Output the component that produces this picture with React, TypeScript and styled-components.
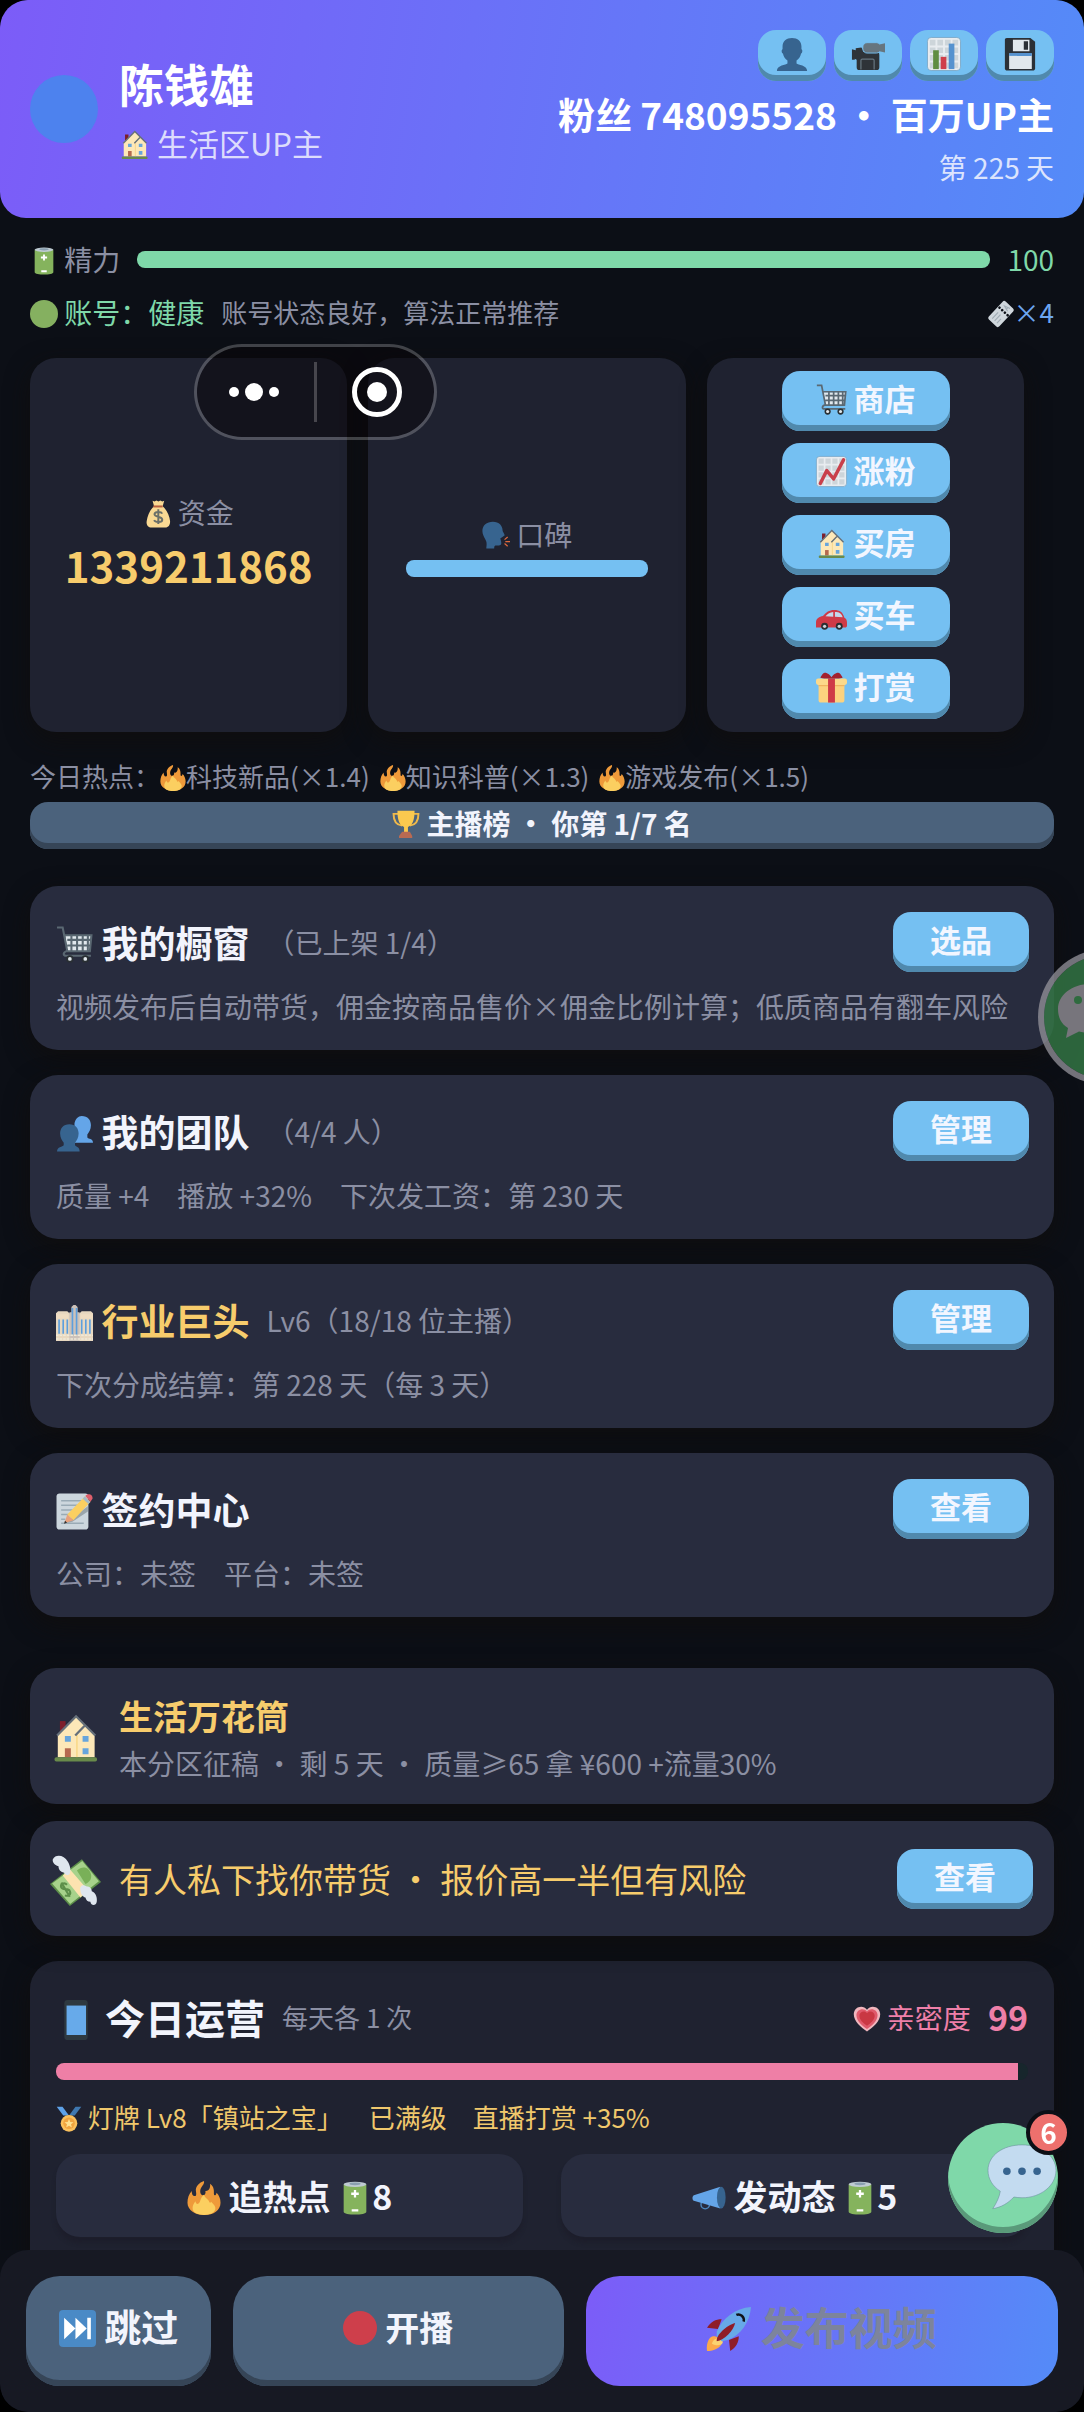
import type { ReactNode } from "react"
import styled, { createGlobalStyle } from "styled-components"

const GlobalStyle = createGlobalStyle`
  * {
    box-sizing: border-box;
  }

  body {
    margin: 0;
    background: #000;
    color: #f2f4fc;
    font-family: "Noto Sans CJK SC", "Noto Sans", sans-serif;
    font-size: 28px;
    line-height: 40px;
    text-spacing-trim: space-all;
  }

  h1,
  h2,
  p {
    margin: 0;
  }

  button {
    border: none;
    margin: 0;
    font-family: inherit;
    cursor: pointer;
  }
`

/* ---------- emoji ---------- */

const EmojiSvg = styled.svg`
  width: 1em;
  height: 1em;
  vertical-align: -0.14em;
  overflow: visible;
`

const Emoji = ({ children }: { children: ReactNode }) => (
  <EmojiSvg viewBox="0 0 36 36" aria-hidden="true">
    {children}
  </EmojiSvg>
)

const House = () => (
  <Emoji>
    <path fill="#7d1f2b" d="M7 6.4h4V14H7z" />
    <path fill="#fde8b8" d="M5.5 15.5 18.400 3l8 8 5.100 5V32h-26z" />
    <path fill="#f9d98c" d="M18.400 15.500h1.200V32h-1.200z" />
    <path fill="none" stroke="#66707a" strokeWidth="1.600" d="M5 16.600 18.400 3l13.600 13.600M17.800 16.600l7-7.200" />
    <path fill="#67a5dc" d="M10.500 17h4.200v4h-4.200zM23 17h4.200v4H23zM23 25.600h4.200v4.200H23z" />
    <path fill="#b5694f" d="M10.500 25.600h4.200V32h-4.200z" />
    <rect x="3.200" y="32" width="30" height="2.900" rx="1.200" fill="#698b4b" />
  </Emoji>
)

const Bust = () => (
  <Emoji>
    <path
      fill="#37648f"
      d="M18 1c6 0 10 3.600 10 9v3c1.400.4 1.200 4-.4 4.600C27 21 25 23.500 22.800 25v3c1.500 1.600 11.200 1.600 11.200 8H2c0-6.400 9.700-6.400 11.200-8v-3C11 23.500 9 21 8.400 17.600 6.800 17 6.600 13.400 8 13v-3c0-5.400 4-9 10-9z"
    />
  </Emoji>
)

const VideoCamera = () => (
  <Emoji>
    <path fill="#2e3338" d="M1 13l4 1v-2l6-1 2 3v2h14c2 0 3 1 3 3v13c0 2-1 3-3 3H9c-2 0-3-1-3-3v-8l-2-1v1H1z" />
    <rect x="12.500" y="6" width="19" height="11" rx="4.500" fill="#66757f" stroke="#75bff0" strokeWidth="1" />
    <path fill="#66757f" d="M30 8l6-1.500v10L30 15z" />
    <path fill="none" stroke="#66757f" strokeWidth="1.300" d="M10.500 34.500V25c0-1 .5-1.500 1.500-1.500h11c1 0 1.500.5 1.500 1.500v9.500" />
  </Emoji>
)

const ChartPaper = () => (
  <>
    <rect x=".5" y=".5" width="35" height="35" rx="4" fill="#e8ecf0" stroke="#5f8fb0" strokeWidth=".6" />
    <path
      fill="#cdd5da"
      d="M3 3h6v6H3zM11 3h6v6h-6zM19 3h6v6h-6zM27 3h6v6h-6zM3 11h6v6H3zM11 11h6v6h-6zM19 11h6v6h-6zM27 11h6v6h-6zM3 19h6v6H3zM11 19h6v6h-6zM19 19h6v6h-6zM27 19h6v6h-6zM3 27h6v6H3zM11 27h6v6h-6zM19 27h6v6h-6zM27 27h6v6h-6z"
    />
  </>
)

const BarChart = () => (
  <Emoji>
    <ChartPaper />
    <path fill="#5f8d42" d="M6.500 14h6v20h-6z" />
    <path fill="#cf3f4a" d="M14.500 21h6v13h-6z" />
    <path fill="#5592cf" d="M23 7h6v27h-6z" />
  </Emoji>
)

const ChartUp = () => (
  <Emoji>
    <ChartPaper />
    <path fill="none" stroke="#c9404b" strokeWidth="4" strokeLinecap="round" strokeLinejoin="round" d="M5 32l7.500-15 8 9.500L32 4.500" />
  </Emoji>
)

const Floppy = () => (
  <Emoji>
    <path fill="#2b3036" d="M4 1h25l5 4v28c0 1.500-1 2.500-2.500 2.500h-27C3 35.500 2 34.500 2 33V3c0-1.200.8-2 2-2z" />
    <path fill="#e1e8ed" d="M10.500 3H28v12H10.500zM6.500 17.500h24V34h-24z" />
    <path fill="#2b3036" d="M22 4.500h4.500v9H22z" />
    <path fill="#5592cf" d="M6.500 17h24v3h-24z" />
  </Emoji>
)

const Battery = () => (
  <Emoji>
    <path fill="#85b35d" d="M6 3.500h24v29c0 4-24 4-24 0z" />
    <ellipse cx="18" cy="3.500" rx="12" ry="2.800" fill="#bfcbd2" />
    <ellipse cx="18" cy="3" rx="6" ry="1.400" fill="#8a9fb0" />
    <path fill="#fff" d="M16.800 9.500h2.400v2.800H22v2.400h-2.800v2.800h-2.400v-2.800H14v-2.400h2.800zM14.500 30h7v2.400h-7z" />
  </Emoji>
)

const Circle = ({ color }: { color: string }) => (
  <Emoji>
    <circle cx="18" cy="18" r="18" fill={color} />
  </Emoji>
)

const Ticket = () => (
  <Emoji>
    <g transform="rotate(-47 18 18)">
      <rect x="1" y="8" width="34" height="20" rx="3" fill="#d0d7dd" />
      <path stroke="#0d1017" strokeWidth="3.600" strokeLinecap="round" strokeDasharray=".1 5" d="M23 10.500v16" />
      <path fill="none" stroke="#a1adb6" strokeWidth="1.600" d="M5 13.500h12M5 18h12M5 22.500h8M27 22l2.500-8 2.500 8M28 19h3" />
    </g>
  </Emoji>
)

const MoneyBag = () => (
  <Emoji>
    <path fill="#f9d993" d="M11 1l2.500 1L16 .5 18.500 2 21 .5 23.500 2 26 1l-2 7c5 4 9 13 9.500 19 .4 5-2 8.500-6 8.500h-18c-4 0-7-3.500-6-8.500C4.500 20 8 12 13 8z" />
    <path fill="#b8603f" d="M12 7h12v2.600H12z" />
    <path fill="none" stroke="#6b7069" strokeWidth="2.500" d="M23.500 17.500c-1.500-3-10-3-10 .8 0 4.200 10 2.200 10 7 0 4-9 4-10.500.7M18.400 12v19" />
  </Emoji>
)

const SpeakingHead = () => (
  <Emoji>
    <path
      fill="#37648f"
      d="M14 1c8 0 12.500 5 12.500 11.500 0 1.500 3 4.500 2.500 6-.3.800-1.600.8-1.800 1.300l-3.700 2.700.8 2.500c.8 3.500 1 5.500-1.500 6.200-2.500.6-5.500-.4-6.500.8-.6 1-.6 2-.6 3.500H5.500c1-7 .5-9-1.500-12.500C2.500 20.500.5 17 .5 13 .5 5.500 6 1 14 1z"
    />
    <path stroke="#e0693c" strokeWidth="1.500" d="M29 24l4-3.500M30 26.500h6M29 29l4 3.500" />
  </Emoji>
)

const Cart = () => (
  <Emoji>
    <path fill="#e1e8ed" d="M9 9.500h25l-1.500 15H11z" />
    <path
      fill="none"
      stroke="#5a6872"
      strokeWidth="2"
      d="M1 1.500h5.500L11 24.500H33L34.500 9H8.500M11 13.500h22.500M11 19h22M15 9v15M20.500 9v15M26 9v15M31 9v15M11 24c-5 2-4 5-1 5h24"
    />
    <circle cx="13.500" cy="32" r="3.600" fill="#292f33" />
    <circle cx="28.500" cy="32" r="3.600" fill="#292f33" />
    <circle cx="13.500" cy="32" r="1.800" fill="#e1e8ed" />
    <circle cx="28.500" cy="32" r="1.800" fill="#e1e8ed" />
  </Emoji>
)

const Car = () => (
  <Emoji>
    <path fill="#cf3a47" d="M0 32v-6c0-5 4-6.500 8-7.500 4-4.500 7-7 13-7 7 0 10 2.500 12 9 2 1 3 2.500 3 6v3.500c0 1.500-1 2-2 2z" />
    <path fill="#c3d9ec" d="M11 19c3-3 5-4.800 9-5v5.500zM22 14c5 0 7.500 1.500 9 6l-9-.5z" />
    <circle cx="10" cy="30.500" r="4" fill="#292f33" />
    <circle cx="27" cy="30.500" r="4" fill="#292f33" />
    <circle cx="10" cy="30.500" r="1.900" fill="#ccd6dd" />
    <circle cx="27" cy="30.500" r="1.900" fill="#ccd6dd" />
  </Emoji>
)

const Gift = () => (
  <Emoji>
    <path fill="#fcd27f" d="M3 14h30v18.500c0 2-1 3-3 3H6c-2 0-3-1-3-3z" />
    <path fill="#f0b45f" d="M3 14h30v2.500H3z" />
    <rect y="7.500" width="36" height="7.500" rx="2.500" fill="#fcd98a" />
    <path fill="#cf3a47" d="M14 7.500h8v28h-8z" />
    <path fill="#a3212f" d="M18 7.500C13 7.500 7 8 5 6.500 7 4 8 1 10 1c4 0 6.500 3 8 5 1.500-2 4-5 8-5 2 0 3 3 5 5.500-2 1.500-8 1-13 1z" />
  </Emoji>
)

const Fire = () => (
  <Emoji>
    <path
      fill="#ee9a3a"
      d="M18 0c1 4-4 6-4 11 0 2 1 4 3 4s3-2 2.500-4.500C22 11 25 9 24.500 3 29 6 28.500 11 28.500 14c0 2 2.500 1.500 2.800-1.500C34 15 35.500 19 35.500 23c0 8-7.500 13-17 13S.5 31 .5 23c0-5 1.500-9 4.500-12.500 0 3 1 5.500 3 5.500s2-2 1.500-5C8.500 6 13 1.500 18 0z"
    />
    <path fill="#fbcf60" d="M18 14.500c1 4 4.500 4 5.500 7.500.5 1.500 1.500 1.500 2 0 3 3 5 5 4.500 8-1 4-6 6-12 6S7 34 6 30c-.5-3.500 1-6 3-8.500.5 3 2 3.500 3.500 2 2.500-2 1-5.500 5.500-9z" />
  </Emoji>
)

const Trophy = () => (
  <Emoji>
    <path fill="none" stroke="#f0b94a" strokeWidth="2.500" d="M8 5H2c0 9 3 14 11 15M28 5h6c0 9-3 14-11 15" />
    <path fill="#fbc94f" d="M7 1h22c0 11-2 18-8.500 21v7h-5v-7C9 19 7 12 7 1z" />
    <path fill="#b96a52" d="M13 28h10l3 5.500V36H9v-2.500z" />
  </Emoji>
)

const Busts = () => (
  <Emoji>
    <path fill="#64a5e8" d="M25 1c6 0 9 4 9 9 0 4-2 7-3.500 9v3c1 1.500 5.500 1 5.500 5H18V8c1-4 3.500-7 7-7z" />
    <path fill="#37648f" d="M13 9c6 0 9 4 9 9 0 4-2 7-3.500 9v2.500C19.500 31 23 31 23 35.500H1C1 31 6.500 31 7.500 29.500V27C6 25 4 22 4 18c0-5 3-9 9-9z" />
  </Emoji>
)

const Buildings = () => (
  <Emoji>
    <path fill="#e8d8c0" d="M0 9l2-2h9l2 2h10l2-2h9l2 2v27H0z" />
    <path fill="#ccc2ba" d="M13 8h2V3l2-2h2l2 2v5h2v28H13z" />
    <path fill="#f0ddc2" d="M0 10h12v4H0zM24 10h12v4H24z" />
    <path stroke="#5d9fdd" strokeWidth="1.600" d="M3 15v14M7 15v14M11 15v14M16 4v26M20 4v26M25 15v14M29 15v14M33 15v14" />
    <path stroke="#f0ead8" strokeWidth="1.500" d="M0 30.500h36M0 34h36" strokeDasharray="2.500 1" />
  </Emoji>
)

const Memo = () => (
  <Emoji>
    <rect x=".5" y=".5" width="31" height="35" rx="3" fill="#ccd6dd" />
    <path stroke="#99aab5" strokeWidth="1.500" d="M5 7.500h21M5 12h17M5 16.500h14M5 21h9M5 25.500h4M5 29.500h22" />
    <path fill="#9aa5ab" d="M9 29.500 31 13v5L16 28z" />
    <path fill="#fbcf60" d="M11 21 28 3.500l5.500 5L17 26.500z" />
    <path fill="#e8a07c" d="M11 21l6 5.500-9 3z" />
    <path fill="#292f33" d="M8.800 27l2 2-3 1z" />
    <path fill="#a3b8c7" d="M26 5.500l5.500 5.300 2-2L28 3.500z" />
    <path fill="#dd5f6c" d="M28.500 3c2-3 7.500-2 7 2.500L33.500 8.500z" />
  </Emoji>
)

const MoneyWings = () => (
  <Emoji>
    <path fill="#5d8f4a" d="M0 20.500 22.500 3 36 19 14 36z" />
    <path fill="#a7d28b" d="M1.500 20.200 22.800 4.200 34.500 18.500 14.200 34.500z" />
    <path fill="#79b058" d="M19 11c4-4 9-2.500 10 3 .5 3-1 5-4 6.500z" />
    <path fill="#fde3b0" d="M9 14.500l5-4.500L27 25l-5.500 5z" />
    <path fill="none" stroke="#5d8f4a" strokeWidth="1.500" d="M12 21c-2-2-5-.5-4 2 1 2 5 0 6 2.500 1 2-1 4-3.500 3M8 19.500l6 10" />
    <path fill="#dfe6ee" d="M2 3C4-1 10 0 12.500 4.500 14 7 15 10 14 13c-1 2-4 1-4-.5C7 12 6 10 6 8 3 7 1.500 5 2 3zM21.500 25c-1-3 2-4.500 4-3 3 0 4 2 4 3.500 3 1 4 5 3.500 7.500-.5 3-4 3-4.500 0-2 0-3-1-3.500-3-2-.5-3.500-3-3.500-5z" />
  </Emoji>
)

const Phone = () => (
  <Emoji>
    <rect x="7.500" width="21" height="36" rx="3" fill="#2e3940" />
    <path fill="#67aaea" d="M9.500 5h17.500v26.500H9.500z" />
  </Emoji>
)

const Medal = () => (
  <Emoji>
    <path fill="#5ea2e8" d="M1 1h8l9 12h-8z" />
    <path fill="#3f78b0" d="M35 1h-8l-9 12h8z" />
    <circle cx="18" cy="24" r="11.500" fill="#fbc15c" />
    <circle cx="18" cy="24" r="8" fill="#f0a43f" />
    <path fill="#fde08f" d="M18 18l1.800 4.200 4.500.3-3.500 2.900 1.200 4.400-4-2.500-4 2.500 1.200-4.400-3.500-2.900 4.500-.3z" />
  </Emoji>
)

const heart = "M18 34C10 29 1 21 1 12 1 2 13-1 18 6 23-1 35 2 35 12c0 9-9 17-17 22z"

const Heart = () => (
  <Emoji>
    <path fill="#f0b6bd" d={heart} />
    <path fill="#df5a6b" d={heart} transform="translate(3.600 3.600) scale(.8)" />
    <path fill="#c93843" d={heart} transform="translate(7.600 7) scale(.58)" />
  </Emoji>
)

const Megaphone = () => (
  <Emoji>
    <circle cx="14" cy="25" r="4.500" fill="none" stroke="#4d88c0" strokeWidth="1.500" />
    <path fill="#64a5e8" d="M2 15 30 6v23L2 21c-2-1-2-5 0-6z" />
    <ellipse cx="31" cy="17.500" rx="4.600" ry="11.500" fill="#37648f" />
  </Emoji>
)

const NextTrack = () => (
  <Emoji>
    <rect width="36" height="36" rx="4" fill="#4a8ac6" />
    <path fill="#fff" d="M5 7.500 16 18 5 28.500zM16 7.500 27 18 16 28.500zM27.500 7.500h3.500v21h-3.500z" />
  </Emoji>
)

const Rocket = () => (
  <Emoji>
    <path fill="#8f1d28" d="M0 17c3-5 7-7 12-7l-3 8zM26 24c0 5-2 9-7 12l-1-9z" />
    <path fill="#fba94a" d="M0 36c-1-8 3-13 6-12 3 0 6 3 6 6-1 3-6 6-12 6z" />
    <path fill="#fbd372" d="M4 30c1-4 5-6 8-3s-2 6-8 3z" />
    <path fill="#67a9e8" d="M8 20C13 9 23 1 36 0 35 12 28 23 17 27l-5 1-4-4z" />
    <path fill="#8f1d28" d="M8 28c-1-5 8-13 15-15-1 6-9 14-15 15z" />
    <path fill="none" stroke="#101318" strokeWidth="2" d="M24 6.500c3-1.500 7 1.500 6 5.500" />
  </Emoji>
)

const Balloon = () => (
  <Emoji>
    <path fill="#c3dbf0" stroke="#6a8f9c" strokeWidth=".3" d="M18 1c10 0 18 5.500 18 13.500S28 29 18 29c-1.500 0-3-.2-4.300-.4-3 3.200-6.500 5.400-11.200 6.200 2-3 3.600-6.300 4-9.300C2.500 23 0 19 0 14.500 0 6.500 8 1 18 1z" />
    <g fill="#37648f">
      <circle cx="10" cy="15" r="2" />
      <circle cx="18" cy="15" r="2" />
      <circle cx="26" cy="15" r="2" />
    </g>
  </Emoji>
)

/* ---------- shared parts ---------- */

const Page = styled.div`
  display: flex;
  flex-direction: column;
  height: 100vh;
  border-radius: 28px;
  overflow: hidden;
  background: #0c0f16;
`

const Scroll = styled.div`
  flex: 1;
  min-height: 0;
  overflow-y: auto;
  scrollbar-width: none;
`

const Content = styled.main`
  padding: 20px 30px 26px;
`

const Button = styled.button<{ $wide?: boolean }>`
  flex-shrink: 0;
  width: ${(p) => (p.$wide ? "168px" : "136px")};
  height: 60px;
  padding: 0 0 6px;
  border-radius: 18px;
  background: #75c0f2;
  box-shadow: inset 0 -6px 0 #5089ad;
  color: #f2f6ff;
  font-size: 31px;
  font-weight: 700;
  line-height: 40px;
`

const Muted = styled.span<{ $size?: number }>`
  color: #8b8fa3;
  font-size: ${(p) => p.$size || 28}px;
`

const Track = styled.div`
  flex: 1;
  height: 17px;
  border-radius: 8px;
  overflow: hidden;
  background: #17262c;
`

const Fill = styled.div<{ $color: string }>`
  height: 100%;
  background: ${(p) => p.$color};
`

interface BarProps {
  label: string
  value: number
  color: string
}

const Bar = ({ label, value, color }: BarProps) => (
  <Track role="progressbar" aria-label={label} aria-valuenow={value}>
    <Fill $color={color} style={{ width: `${value}%` }} />
  </Track>
)

/* ---------- header ---------- */

const Header = styled.header`
  display: flex;
  align-items: center;
  padding: 30px 30px 31px;
  border-radius: 26px;
  background: linear-gradient(100deg, #7c5cf8, #548bf8);
`

const HeaderBackdrop = styled.div`
  background: linear-gradient(#000 50%, transparent 50%);
`

const Avatar = styled.div`
  width: 68px;
  height: 68px;
  margin-right: 21px;
  border-radius: 50%;
  background: #4d82ee;
`

const Name = styled.h1`
  margin-bottom: 6px;
  color: #fff;
  font-size: 45px;
  line-height: 62px;
`

const Role = styled.p`
  color: #dcdcfc;
  font-size: 31px;
  line-height: 44px;
`

const HeaderSide = styled.div`
  display: flex;
  flex-direction: column;
  align-items: flex-end;
  margin-left: auto;
`

const Tools = styled.div`
  display: flex;
  gap: 8px;
`

const ToolButton = styled.button`
  width: 68px;
  height: 51px;
  padding: 0 0 6px;
  border-radius: 18px;
  background: #75c0f2;
  box-shadow: inset 0 -6px 0 #5089ad;
  font-size: 34px;
  line-height: 40px;
`

const Fans = styled.p`
  margin: 6px 0;
  color: #fff;
  font-size: 37px;
  font-weight: 700;
  line-height: 54px;
`

const Day = styled.p`
  color: #dce4fd;
`

/* ---------- status ---------- */

const StatusRow = styled.div`
  display: flex;
  align-items: center;
  gap: 17px;
  height: 42px;
  margin-bottom: 11px;
  color: #7fd8a9;
`

const Tickets = styled.span`
  margin-left: auto;
  color: #6ca6f0;
  font-size: 26px;
`

const Stats = styled.section`
  display: flex;
  gap: 21px;
  margin-top: 25px;
`

const StatCard = styled.div`
  display: flex;
  flex-direction: column;
  justify-content: center;
  align-items: center;
  width: 31%;
  padding: 13px;
  border-radius: 26px;
  background: #1f2230;
  box-shadow: 0 8px 24px rgba(16, 14, 12, 0.8);
`

const Money = styled.strong`
  color: #f7cc6c;
  font-size: 42px;
  line-height: 66px;
`

const Reputation = styled.div`
  display: flex;
  width: 100%;
  padding: 6px 25px 0;
`

const ShopList = styled.div`
  display: flex;
  flex-direction: column;
  gap: 12px;
`

const Hot = styled.p`
  margin-top: 24px;
  color: #8b8fa3;
  font-size: 26px;
`

const HotTopic = styled.span`
  margin-right: 10px;
`

const RankButton = styled.button`
  display: block;
  width: 100%;
  height: 47px;
  margin: 6px 0 37px;
  padding: 0 0 6px;
  border-radius: 18px;
  background: #4b627c;
  box-shadow: inset 0 -6px 0 #364557;
  color: #f2f4fc;
  font-size: 28px;
  font-weight: 700;
  line-height: 40px;
`

/* ---------- cards ---------- */

const Card = styled.section`
  margin-bottom: 25px;
  padding: 26px 25px 24px 26px;
  border-radius: 28px;
  background: #282c3e;
  box-shadow: 0 8px 24px rgba(16, 14, 12, 0.8);
`

const CardHead = styled.div`
  display: flex;
  align-items: center;
  gap: 17px;
  margin-bottom: 14px;
`

const CardTitle = styled.h2<{ $gold?: boolean }>`
  color: ${(p) => (p.$gold ? "#f7cc6c" : "#f2f4fc")};
  font-size: 37px;
  line-height: 54px;
`

const Spacer = styled.div`
  flex: 1;
`

const CardText = styled.p`
  color: #8b8fa3;
`

interface InfoCardProps {
  icon: ReactNode
  title: string
  note?: string
  action: string
  text: string
  gold?: boolean
}

const InfoCard = (props: InfoCardProps) => {
  const { icon, title, note, action, text, gold } = props

  return (
    <Card>
      <CardHead>
        <CardTitle $gold={gold}>
          {icon} {title}
        </CardTitle>
        {note && <Muted>{note}</Muted>}
        <Spacer />
        <Button>{action}</Button>
      </CardHead>
      <CardText>{text}</CardText>
    </Card>
  )
}

const Notices = styled.div`
  display: flex;
  flex-direction: column;
  gap: 17px;
  margin: 51px 0 25px;
`

const Notice = styled.section<{ $tall?: boolean }>`
  display: flex;
  align-items: center;
  gap: 18px;
  min-height: ${(p) => (p.$tall ? "136px" : "115px")};
  padding: 0 21px 0 20px;
  border-radius: 26px;
  background: #282c3e;
  box-shadow: 0 8px 24px rgba(16, 14, 12, 0.8);
`

const NoticeIcon = styled.div`
  font-size: 51px;
  line-height: 51px;
`

const NoticeTitle = styled.p<{ $bold?: boolean }>`
  color: #f7cc6c;
  font-size: 34px;
  font-weight: ${(p) => (p.$bold ? 700 : 400)};
  line-height: 54px;
`

/* ---------- daily operations ---------- */

const Operations = styled.section`
  padding: 26px 26px 60px;
  border-radius: 28px;
  background: #1f2230;
  box-shadow: 0 8px 24px rgba(16, 14, 12, 0.8);
`

const OperationsHead = styled.div`
  display: flex;
  align-items: center;
  gap: 17px;
  margin-bottom: 16px;
`

const OperationsTitle = styled.h2`
  font-size: 40px;
  line-height: 60px;
`

const Pink = styled.span`
  color: #ee7fa8;
`

const Score = styled.strong`
  color: #ee7fa8;
  font-size: 34px;
`

const Badge = styled.p`
  margin: 17px 0;
  color: #f0c86c;
  font-size: 26px;
`

const Actions = styled.div`
  display: grid;
  grid-template-columns: 1fr 1fr;
  gap: 38px;
`

const ActionButton = styled.button`
  height: 83px;
  border-radius: 24px;
  background: #282c3e;
  box-shadow: 0 6px 4px rgba(26, 24, 34, 0.35);
  color: #f2f4fc;
  font-size: 34px;
  font-weight: 700;
`

/* ---------- bottom bar ---------- */

const BottomBar = styled.footer`
  display: flex;
  gap: 22px;
  padding: 26px;
  border-radius: 28px;
  background: #171923;
`

const BarButton = styled.button<{ $grow: number; $size: number }>`
  flex: ${(p) => (p.$grow ? `${p.$grow} 1 0` : "0 0 185px")};
  height: 110px;
  padding: 0 0 10px;
  border-radius: 34px;
  background: #4b627c;
  box-shadow: inset 0 -6px 0 #364557;
  color: #f2f4fc;
  font-size: ${(p) => p.$size}px;
  font-weight: 700;
`

const PublishButton = styled(BarButton)`
  background: linear-gradient(100deg, #7c5cf8, #548bf8);
  box-shadow: none;
  color: #7d849c;
`

/* ---------- floating controls ---------- */

const Capsule = styled.div`
  position: fixed;
  top: 344px;
  left: 194px;
  display: flex;
  align-items: center;
  justify-content: space-between;
  width: 243px;
  height: 96px;
  padding: 0 32px;
  border: 3px solid rgba(255, 255, 255, 0.22);
  border-radius: 48px;
  background: rgba(8, 4, 8, 0.5);
  background-clip: padding-box;
`

const CapsuleButton = styled.button`
  display: flex;
  padding: 0;
  background: none;
`

const CapsuleDivider = styled.div`
  width: 3px;
  height: 60px;
  background: rgba(255, 255, 255, 0.22);
`

const ChatButton = styled.button`
  position: fixed;
  right: 26px;
  bottom: 179px;
  display: flex;
  width: 110px;
  height: 110px;
  padding: 20px 2px 0 40px;
  border-radius: 50%;
  background: #7fd8a9;
  box-shadow: inset 0 -6px 0 #5a9a7a;
  font-size: 68px;
  line-height: 68px;
`

const ChatCount = styled.span`
  position: absolute;
  top: -13px;
  right: -13px;
  width: 45px;
  height: 45px;
  border: 4px solid #0c0f16;
  border-radius: 50%;
  background: #ed706d;
  color: #fff;
  font-size: 28px;
  font-weight: 700;
  line-height: 37px;
`

const WechatButton = styled.button`
  position: fixed;
  top: 949px;
  right: -90px;
  width: 136px;
  height: 136px;
  padding: 0;
  border: 6px solid rgba(150, 148, 156, 0.75);
  border-radius: 50%;
  background: rgba(52, 122, 70, 0.8);
  background-clip: padding-box;
`

const shops = [
  { icon: <Cart />, name: "商店" },
  { icon: <ChartUp />, name: "涨粉" },
  { icon: <House />, name: "买房" },
  { icon: <Car />, name: "买车" },
  { icon: <Gift />, name: "打赏" },
]

const tools = [
  { icon: <Bust />, name: "个人" },
  { icon: <VideoCamera />, name: "视频" },
  { icon: <BarChart />, name: "数据" },
  { icon: <Floppy />, name: "存档" },
]

const hotTopics = ["科技新品(×1.4)", "知识科普(×1.3)", "游戏发布(×1.5)"]

const App = () => {
  return (
    <Page lang="zh-CN">
      <GlobalStyle />
      <Scroll>
        <HeaderBackdrop>
          <Header>
            <Avatar />
            <div>
              <Name>陈钱雄</Name>
              <Role>
                <House /> 生活区UP主
              </Role>
            </div>
            <HeaderSide>
              <Tools>
                {tools.map((tool) => (
                  <ToolButton key={tool.name} aria-label={tool.name}>
                    {tool.icon}
                  </ToolButton>
                ))}
              </Tools>
              <Fans>粉丝 748095528 · 百万UP主</Fans>
              <Day>第 225 天</Day>
            </HeaderSide>
          </Header>
        </HeaderBackdrop>

        <Content>
          <StatusRow>
            <Muted>
              <Battery /> 精力
            </Muted>
            <Bar label="精力" value={100} color="#7fd8a9" />
            <span>100</span>
          </StatusRow>
          <StatusRow>
            <span>
              <Circle color="#85b060" /> 账号：健康
            </span>
            <Muted $size={26}>账号状态良好，算法正常推荐</Muted>
            <Tickets>
              <Ticket />×4
            </Tickets>
          </StatusRow>

          <Stats>
            <StatCard>
              <Muted>
                <MoneyBag /> 资金
              </Muted>
              <Money>1339211868</Money>
            </StatCard>
            <StatCard>
              <Muted>
                <SpeakingHead /> 口碑
              </Muted>
              <Reputation>
                <Bar label="口碑" value={100} color="#75c0f2" />
              </Reputation>
            </StatCard>
            <StatCard>
              <ShopList>
                {shops.map((shop) => (
                  <Button key={shop.name} $wide>
                    {shop.icon} {shop.name}
                  </Button>
                ))}
              </ShopList>
            </StatCard>
          </Stats>

          <Hot>
            今日热点：
            {hotTopics.map((topic) => (
              <HotTopic key={topic}>
                <Fire />
                {topic}
              </HotTopic>
            ))}
          </Hot>
          <RankButton>
            <Trophy /> 主播榜 · 你第 1/7 名
          </RankButton>

          <InfoCard
            icon={<Cart />}
            title="我的橱窗"
            note="（已上架 1/4）"
            action="选品"
            text="视频发布后自动带货，佣金按商品售价×佣金比例计算；低质商品有翻车风险"
          />
          <InfoCard
            icon={<Busts />}
            title="我的团队"
            note="（4/4 人）"
            action="管理"
            text="质量 +4　播放 +32%　下次发工资：第 230 天"
          />
          <InfoCard
            icon={<Buildings />}
            title="行业巨头"
            note="Lv6（18/18 位主播）"
            action="管理"
            text="下次分成结算：第 228 天（每 3 天）"
            gold
          />
          <InfoCard
            icon={<Memo />}
            title="签约中心"
            action="查看"
            text="公司：未签　平台：未签"
          />

          <Notices>
            <Notice $tall>
              <NoticeIcon>
                <House />
              </NoticeIcon>
              <div>
                <NoticeTitle $bold>生活万花筒</NoticeTitle>
                <CardText>本分区征稿 · 剩 5 天 · 质量≥65 拿 ¥600 +流量30%</CardText>
              </div>
            </Notice>
            <Notice>
              <NoticeIcon>
                <MoneyWings />
              </NoticeIcon>
              <NoticeTitle>有人私下找你带货 · 报价高一半但有风险</NoticeTitle>
              <Spacer />
              <Button>查看</Button>
            </Notice>
          </Notices>

          <Operations>
            <OperationsHead>
              <OperationsTitle>
                <Phone /> 今日运营
              </OperationsTitle>
              <Muted $size={26}>每天各 1 次</Muted>
              <Spacer />
              <Pink>
                <Heart /> 亲密度
              </Pink>
              <Score>99</Score>
            </OperationsHead>
            <Bar label="亲密度" value={99} color="#ee7fa6" />
            <Badge>
              <Medal /> 灯牌 Lv8「镇站之宝」　已满级　直播打赏 +35%
            </Badge>
            <Actions>
              <ActionButton>
                <Fire /> 追热点 <Battery />8
              </ActionButton>
              <ActionButton>
                <Megaphone /> 发动态 <Battery />5
              </ActionButton>
            </Actions>
          </Operations>
        </Content>
      </Scroll>

      <BottomBar>
        <BarButton $grow={0} $size={37}>
          <NextTrack /> 跳过
        </BarButton>
        <BarButton $grow={7} $size={34}>
          <Circle color="#ce3f4b" /> 开播
        </BarButton>
        <PublishButton $grow={10} $size={44} disabled>
          <Rocket /> 发布视频
        </PublishButton>
      </BottomBar>

      <Capsule>
        <CapsuleButton aria-label="更多">
          <svg width="50" height="18" viewBox="0 0 50 18" fill="#fff">
            <circle cx="5" cy="9" r="5" />
            <circle cx="25" cy="9" r="9" />
            <circle cx="45" cy="9" r="5" />
          </svg>
        </CapsuleButton>
        <CapsuleDivider />
        <CapsuleButton aria-label="关闭">
          <svg width="50" height="50" viewBox="0 0 50 50">
            <circle cx="25" cy="25" r="22.500" fill="none" stroke="#fff" strokeWidth="5" />
            <circle cx="25" cy="25" r="10" fill="#fff" />
          </svg>
        </CapsuleButton>
      </Capsule>

      <WechatButton aria-label="微信">
        <svg width="124" height="124" viewBox="0 0 124 124">
          <path
            fill="#77757c"
            d="M46 29c18 0 32 11 32 25S64 78 46 78c-4 0-8-.6-11-1.500L22 83l2-10c-7-4-10-11-10-19 0-14 14-25 32-25z"
          />
          <circle cx="34" cy="45" r="4" fill="#2f6b3f" />
          <circle cx="58" cy="45" r="4" fill="#2f6b3f" />
        </svg>
      </WechatButton>

      <ChatButton aria-label="消息">
        <Balloon />
        <ChatCount>6</ChatCount>
      </ChatButton>
    </Page>
  )
}

export default App
